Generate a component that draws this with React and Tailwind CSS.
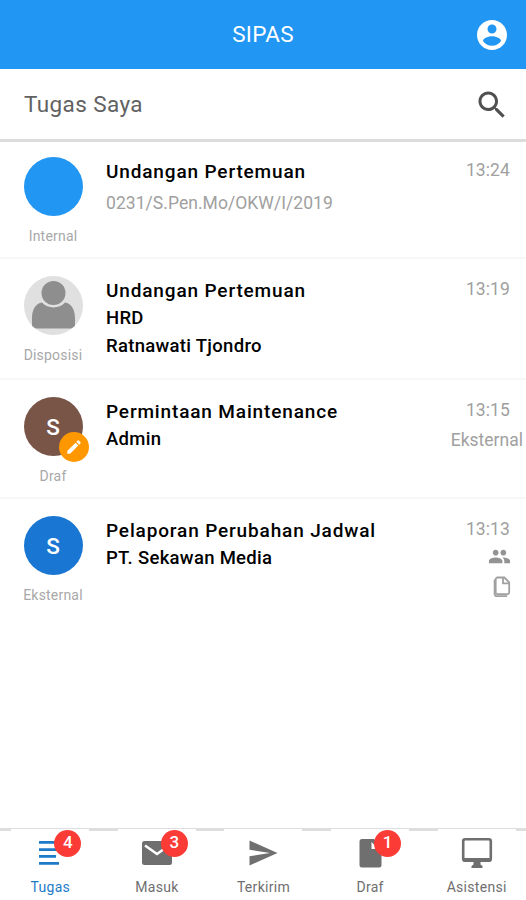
import clsx from "clsx";

const icons = {
  account:
    "M12 2C6.48 2 2 6.48 2 12s4.48 10 10 10 10-4.48 10-10S17.52 2 12 2zm0 3c1.66 0 3 1.34 3 3s-1.34 3-3 3-3-1.34-3-3 1.34-3 3-3zm0 14.2c-2.5 0-4.71-1.28-6-3.22.03-1.99 4-3.08 6-3.08 1.99 0 5.97 1.09 6 3.08-1.29 1.94-3.5 3.22-6 3.22z",
  search:
    "M15.5 14h-.79l-.28-.27C15.41 12.59 16 11.11 16 9.5 16 5.91 13.09 3 9.5 3S3 5.91 3 9.5 5.91 16 9.5 16c1.61 0 3.09-.59 4.23-1.57l.27.28v.79l5 4.99L20.49 19l-4.99-5zm-6 0C7.01 14 5 11.99 5 9.5S7.01 5 9.5 5 14 7.01 14 9.5 11.99 14 9.5 14z",
  pencil:
    "M3 17.25V21h3.75L17.81 9.94l-3.75-3.75L3 17.25zM20.71 7.04c.39-.39.39-1.02 0-1.41l-2.34-2.34c-.39-.39-1.02-.39-1.41 0l-1.83 1.83 3.75 3.75 1.83-1.83z",
  people:
    "M16 11c1.66 0 2.99-1.34 2.99-3S17.66 5 16 5s-3 1.34-3 3 1.34 3 3 3zm-8 0c1.66 0 2.99-1.34 2.99-3S9.66 5 8 5 5 6.34 5 8s1.34 3 3 3zm0 2c-2.33 0-7 1.17-7 3.5V19h14v-2.5c0-2.33-4.67-3.5-7-3.5zm8 0c-.29 0-.62.02-.97.05 1.16.84 1.97 1.97 1.97 3.45V19h6v-2.5c0-2.33-4.67-3.5-7-3.5z",
};

const Icon = ({ name, className }) => (
  <svg viewBox="0 0 24 24" fill="currentColor" className={className}>
    <path d={icons[name]} />
  </svg>
);

const FilesIcon = () => (
  <svg
    viewBox="0 0 18 22"
    fill="none"
    stroke="currentColor"
    strokeWidth="1.8"
    strokeLinejoin="round"
    className="w-[18px] h-[22px]"
  >
    <path d="M4.500 1.500h6.800l4.900 4.900v9.900a1.800 1.800 0 0 1-1.800 1.800H4.500a1.800 1.800 0 0 1-1.800-1.800V3.300A1.800 1.800 0 0 1 4.500 1.500z" />
    <path d="M10 1.500v5.900h6M1.600 3.500v14.600a2 2 0 0 0 2 2h10.600" />
  </svg>
);

const messages = [
  {
    id: 1,
    title: "Undangan Pertemuan",
    number: "0231/S.Pen.Mo/OKW/I/2019",
    time: "13:24",
    type: "Internal",
    color: "bg-[#2196f3]",
    height: "h-[117px] pt-[15px]",
  },
  {
    id: 2,
    title: "Undangan Pertemuan",
    lines: ["HRD", "Ratnawati Tjondro"],
    time: "13:19",
    type: "Disposisi",
    person: true,
    color: "bg-[#e0e0e0]",
    height: "h-[121px] pt-[17px]",
  },
  {
    id: 3,
    title: "Permintaan Maintenance",
    lines: ["Admin"],
    time: "13:15",
    type: "Draf",
    initial: "S",
    draft: true,
    note: "Eksternal",
    color: "bg-[#795548]",
    height: "h-[119px] pt-[17px]",
  },
  {
    id: 4,
    title: "Pelaporan Perubahan Jadwal",
    lines: ["PT. Sekawan Media"],
    time: "13:13",
    type: "Eksternal",
    initial: "S",
    attachments: true,
    color: "bg-[#1976d2]",
    height: "h-[119px] pt-[17px]",
  },
];

const Avatar = ({ message }) => (
  <div className="relative w-[59px] h-[59px]">
    <div
      className={clsx(
        "w-full h-full rounded-full flex items-center justify-center overflow-hidden text-white text-[22.5px] font-medium",
        message.color
      )}
    >
      {message.initial && <span className="pt-0.5">{message.initial}</span>}
      {message.person && (
        <svg viewBox="0 0 59 59" fill="#8e8e8e" className="w-full h-full">
          <circle cx="29.5" cy="17" r="12" />
          <path d="M8 52.5V42c0-9 4-14.500 10-15.500 6 6.500 17 6.500 23 0 6 1 10 6.500 10 15.500v10.500z" />
        </svg>
      )}
    </div>
    {message.draft && (
      <span className="absolute left-[35px] top-[35px] w-[30px] h-[30px] rounded-full bg-[#ff9800] text-white flex items-center justify-center">
        <Icon name="pencil" className="w-[18px] h-[18px]" />
      </span>
    )}
  </div>
);

const MessageRow = ({ message }) => (
  <li
    className={clsx(
      "flex border-b-2 border-[#f7f7f7] last:border-b-0",
      message.height
    )}
  >
    <div className="w-[106px] shrink-0 flex flex-col items-center">
      <Avatar message={message} />
      <span className="mt-[10px] text-[14px] leading-[20px] tracking-[0.2px] text-[#a8a8a8]">
        {message.type}
      </span>
    </div>
    <div className="flex-1 pt-px text-black">
      <h2 className="text-[19px] leading-[28px] font-medium tracking-[0.85px] whitespace-nowrap">
        {message.title}
      </h2>
      {message.number && (
        <p className="mt-1 text-[17.5px] leading-[26px] tracking-[0.05px] text-[#a0a0a0]">
          {message.number}
        </p>
      )}
      {message.lines?.map((line) => (
        <p
          key={line}
          className="text-[18.5px] leading-[27.5px] font-medium tracking-[0.3px]"
        >
          {line}
        </p>
      ))}
    </div>
    <div className="shrink-0 flex flex-col items-end pr-4 text-[#a0a0a0]">
      <time className="text-[17.5px] leading-[26px] tracking-[0.1px]">
        {message.time}
      </time>
      {message.note && (
        <span className="-mr-[13px] mt-1 text-[17.5px] leading-[26px]">
          {message.note}
        </span>
      )}
      {message.attachments && (
        <>
          <Icon
            name="people"
            className="mt-[3px] -mr-px w-[23px] h-[23px] text-[#939393]"
          />
          <span className="mt-[8px] -mr-px">
            <FilesIcon />
          </span>
        </>
      )}
    </div>
  </li>
);

const TasksIcon = () => (
  <svg viewBox="0 0 22 25" fill="currentColor" className="w-[22px] h-[25px]">
    <path d="M0 0h18v2.700H0zM0 7.200h20v2.700H0zM0 14h17v2.700H0zM0 21h20v2.700H0z" />
  </svg>
);

const MailIcon = () => (
  <svg viewBox="0 0 32 26" className="w-[32px] h-[26px]">
    <rect x="1" y="1" width="30" height="24" rx="2.500" fill="currentColor" />
    <path
      d="M4 5.500l12 8.500 12-8.500"
      fill="none"
      stroke="white"
      strokeWidth="2.600"
    />
  </svg>
);

const SendIcon = () => (
  <svg viewBox="0 0 29 26" fill="currentColor" className="w-[29px] h-[26px]">
    <path d="M.5.500L28.500 13 .5 25.500v-9.300L21 13 .5 9.800z" />
  </svg>
);

const DraftIcon = () => (
  <svg viewBox="0 0 23 30" className="w-[23px] h-[30px]">
    <path
      d="M3 1h12l7.500 7.500V27a2.500 2.500 0 0 1-2.500 2.500H3A2.500 2.500 0 0 1 .5 27V3.500A2.500 2.500 0 0 1 3 1z"
      fill="currentColor"
    />
    <path d="M12.500 4v7h7z" fill="white" />
  </svg>
);

const DesktopIcon = () => (
  <svg viewBox="0 0 32 32" className="w-[32px] h-[32px]">
    <rect
      x="2.200"
      y="2.200"
      width="27.600"
      height="21.600"
      rx="2"
      fill="none"
      stroke="currentColor"
      strokeWidth="2.600"
    />
    <path
      d="M2 21h28v3.500H2zM12.500 24h7v3.500l2 1.500v2h-11v-2l2-1.500z"
      fill="currentColor"
    />
  </svg>
);

const tabs = [
  { label: "Tugas", icon: TasksIcon, count: 4, active: true },
  { label: "Masuk", icon: MailIcon, count: 3 },
  { label: "Terkirim", icon: SendIcon },
  { label: "Draf", icon: DraftIcon, count: 1 },
  { label: "Asistensi", icon: DesktopIcon },
];

const BottomNav = () => (
  <nav className="h-[72px] border-t border-[#dedede] overflow-hidden">
    <div className="-ml-[3px] -mr-[4px] h-full flex">
      {tabs.map(({ label, icon: TabIcon, count, active }) => (
        <div
          key={label}
          className="flex-1 flex justify-center bg-[linear-gradient(#dedede_2px,white_2px)]"
        >
          <div
            className={clsx(
              "w-[78px] bg-white flex flex-col items-center",
              active ? "text-[#1f7bc8]" : "text-[#6f6f6f]"
            )}
          >
            <div className="relative mt-2 w-[32px] h-8 flex items-center justify-center">
              <TabIcon />
              {count && (
                <span className="absolute left-[20px] -top-[7px] w-[27px] h-[27px] rounded-full bg-[#fb3b35] text-white text-[17px] font-medium flex items-center justify-center pb-[2px]">
                  {count}
                </span>
              )}
            </div>
            <span className="mt-2 text-[14px] leading-[20px] tracking-[0.3px]">
              {label}
            </span>
          </div>
        </div>
      ))}
    </div>
  </nav>
);

const App = () => {
  return (
    <div className="w-full h-screen flex flex-col bg-white overflow-hidden font-['Roboto',sans-serif]">
      <header className="h-[69px] shrink-0 bg-[#2196f3] text-white grid grid-cols-[1fr_auto_1fr] items-center">
        <h1 className="col-start-2 text-[22.5px] tracking-[0.3px]">SIPAS</h1>
        <Icon name="account" className="w-9 h-9 justify-self-end mr-4" />
      </header>

      <div className="h-[73px] shrink-0 border-b-3 border-[#dcdcdc] pl-6 pr-4 pt-px flex items-center justify-between">
        <span className="text-[22.5px] tracking-[0.4px] text-[#616161]">
          Tugas Saya
        </span>
        <Icon name="search" className="w-9 h-9 text-[#505050]" />
      </div>

      <ul className="flex-1">
        {messages.map((message) => (
          <MessageRow key={message.id} message={message} />
        ))}
      </ul>

      <BottomNav />
    </div>
  );
};

export default App;
